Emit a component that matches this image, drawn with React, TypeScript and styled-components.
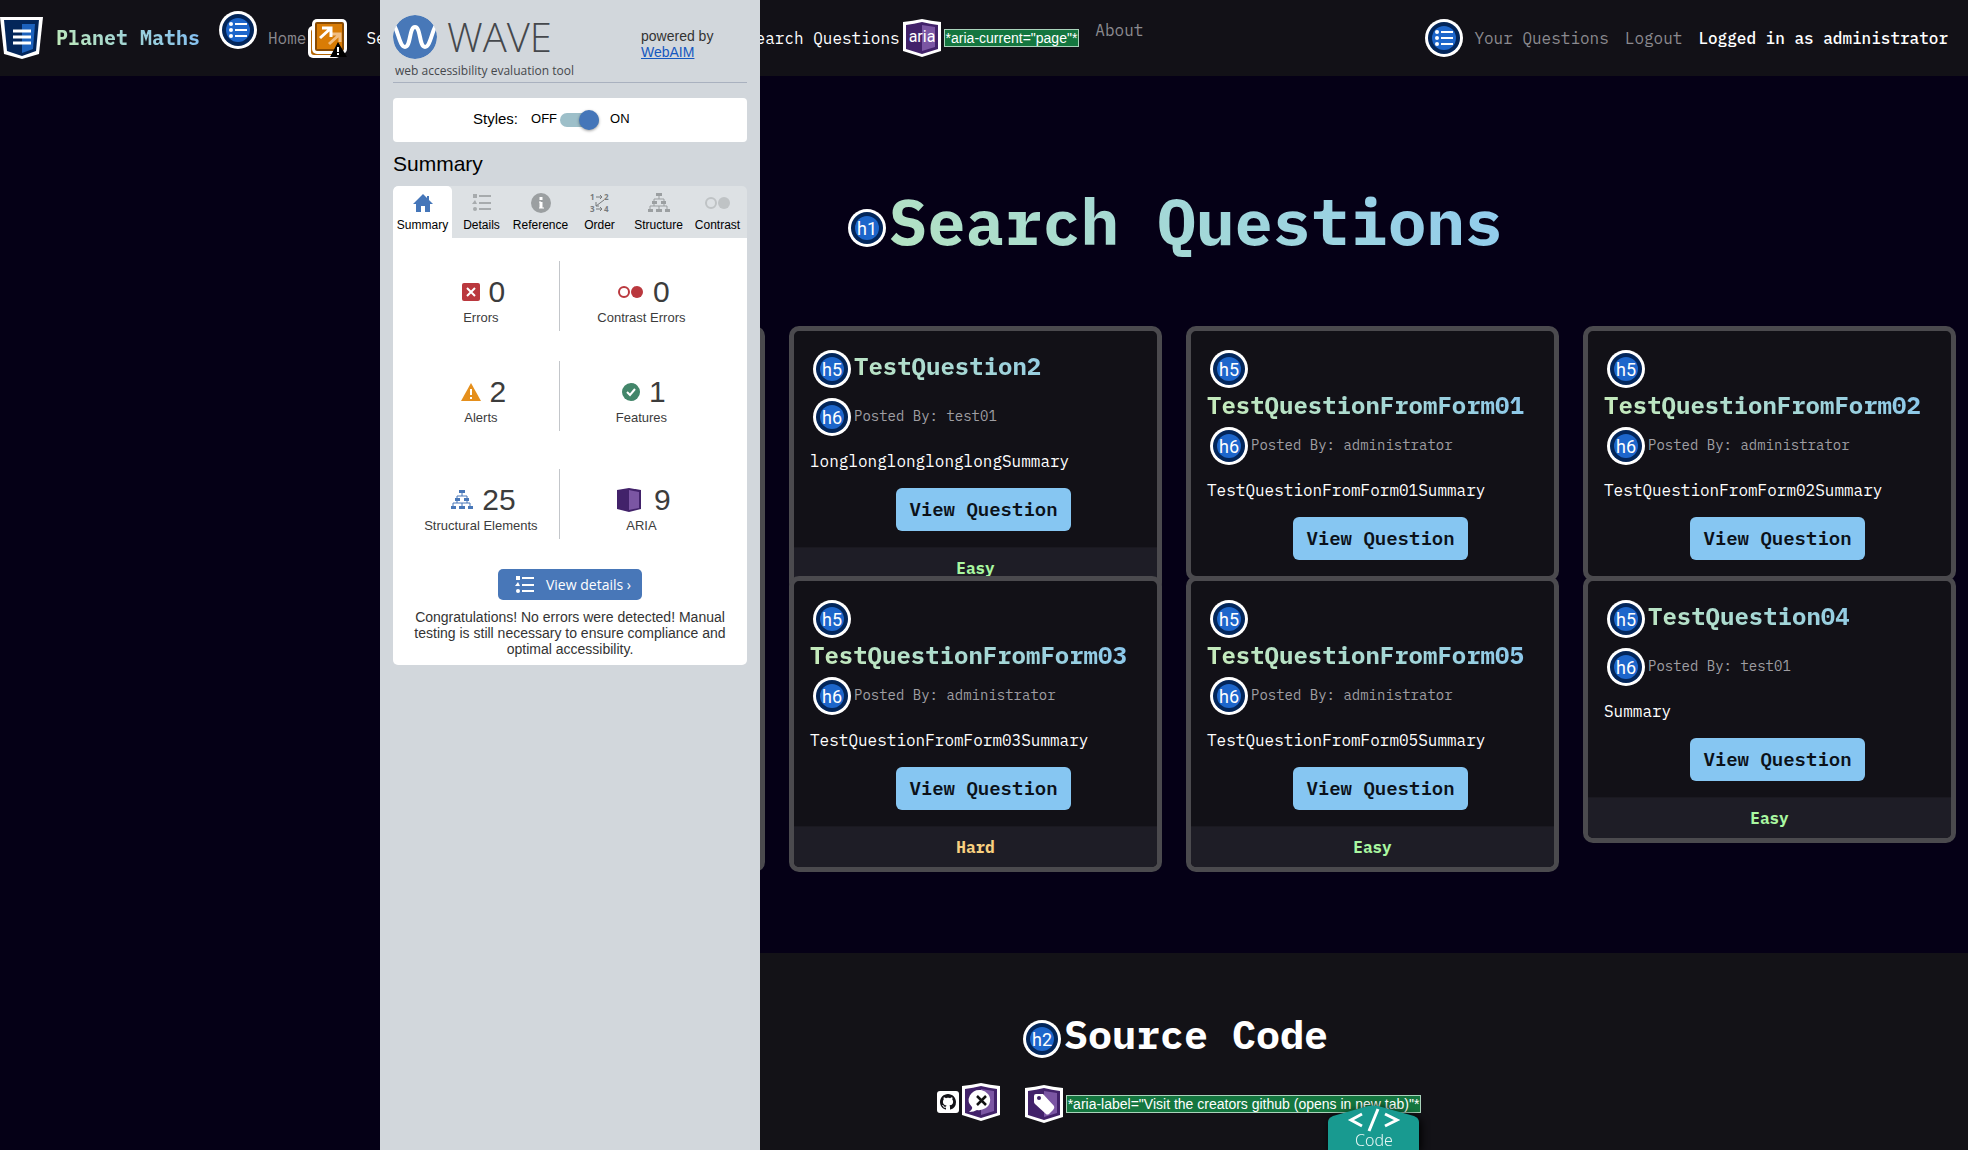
import React from "react";
import styled, { createGlobalStyle } from "styled-components";

const MONO = '"IBM Plex Mono", "Liberation Mono", monospace';
const SANS = '"Liberation Sans", Arial, sans-serif';
const OPEN = '"Open Sans", "Noto Sans", sans-serif';
const BADGE = 'Roboto, "Open Sans", sans-serif';

const GlobalStyle = createGlobalStyle`
  * { box-sizing: border-box; }
  body {
    margin: 0;
    background: #050016;
    color: #fff;
    font-family: ${MONO};
    font-size: 16px;
    line-height: 24px;
  }
  h1, h2, h5, h6, p { margin: 0; }
  a { color: inherit; text-decoration: none; }
  svg { display: block; flex: none; overflow: visible; }
`;

/* ---------- page shell ---------- */

const Page = styled.div`
  min-height: 100vh;
  display: flex;
  flex-direction: column;
`;

const Content = styled.div`
  margin-left: 380px;
  flex: 1;
  display: flex;
  flex-direction: column;
`;

const NavBar = styled.nav`
  height: 76px;
  display: flex;
  align-items: center;
  padding-right: 20px;
  background: #121117;
  white-space: nowrap;
`;

const NavGroup = styled.div<{ $gap: number; $flex?: string }>`
  display: flex;
  align-items: center;
  gap: ${(p) => p.$gap}px;
  flex: ${(p) => p.$flex ?? "none"};
`;

const Brand = styled.a`
  margin: 0 17px 0 11px;
  font-size: 20px;
  font-weight: 700;
  background: linear-gradient(45deg, #c1ebb6, #7fbcf5);
  -webkit-background-clip: text;
  background-clip: text;
  color: transparent;
`;

const NavLink = styled.a<{ $tone?: "muted" | "bright" }>`
  color: ${(p) => (p.$tone === "bright" ? "#ffffff" : "#8b8a8f")};
`;

const Raised = styled.span`
  display: inline-flex;
  padding-bottom: 16px;
`;

const SkipLink = styled(NavLink)`
  margin-left: 17px;
`;

const AriaNote = styled.span`
  padding: 0 1px;
  border: 1px solid #a9d3bb;
  background: #14763f;
  color: #fff;
  font: 14px/16px ${SANS};
  white-space: nowrap;
`;

const UserName = styled.span`
  font-weight: 500;
`;

/* ---------- main ---------- */

const Main = styled.main`
  padding: 107px 12px 81px;
`;

const PageTitle = styled.h1`
  display: flex;
  justify-content: center;
  margin-bottom: 66px;
  font-size: 64px;
  line-height: 77px;
`;

const TitleText = styled.span`
  background: linear-gradient(45deg, #b4e3c2, #90cbef);
  -webkit-background-clip: text;
  background-clip: text;
  color: transparent;
`;

const IconSlot = styled.span`
  display: inline-block;
  vertical-align: middle;
  margin: 3px;
`;

const CardGrid = styled.div`
  display: grid;
  grid-template-columns: repeat(4, 1fr);
  grid-template-rows: 250px auto;
  column-gap: 24px;
  align-items: start;
`;

const Card = styled.article`
  border: 5px solid #4b4a4e;
  border-radius: 10px;
  background: #121117;
  overflow: hidden;
`;

const TallCard = styled(Card)`
  grid-row: 1 / span 2;
  align-self: stretch;
`;

const CardBody = styled.div`
  padding: 16px;
`;

const CardTitle = styled.h5`
  font-size: 24px;
  line-height: 29px;
  background: linear-gradient(45deg, #c8ecb8, #7fc0f5);
  -webkit-background-clip: text;
  background-clip: text;
  color: transparent;
`;

const CardAuthor = styled.h6`
  margin: 4px 0 10px;
  font-size: 14px;
  line-height: 17px;
  font-weight: 400;
  color: #9f9ea2;
`;

const CardAction = styled.div`
  display: flex;
  justify-content: center;
  padding: 15px 0 0 16px;
`;

const ViewLink = styled.a`
  padding: 8px 13px;
  border-radius: 6px;
  background: #86c6f2;
  color: #0b1119;
  font-size: 19px;
  line-height: 27px;
  font-weight: 600;
`;

const CardFooter = styled.footer<{ $level: string }>`
  padding: 8px;
  border-top: 1px solid #1a1920;
  background: #1e1d26;
  color: ${(p) => (p.$level === "Hard" ? "#f8d080" : "#a9f7a0")};
  font-weight: 700;
  text-align: center;
`;

/* ---------- footer ---------- */

const PageFooter = styled.footer`
  flex: 1;
  padding-top: 57px;
  background: #131217;
`;

const SourceTitle = styled.h2`
  font-size: 40px;
  line-height: 48px;
  text-align: center;
`;

const SourceLinks = styled.div`
  display: flex;
  justify-content: center;
  align-items: center;
  gap: 3px;
  padding: 21px 0 0 10px;
`;

const LabelGroup = styled.a`
  display: flex;
  align-items: center;
  gap: 3px;
  padding: 3px 0 0 22px;
`;

const CodeTab = styled.button`
  position: fixed;
  left: 1328px;
  bottom: 0;
  width: 91px;
  height: 45px;
  padding: 0;
  border: 0;
  background: none;
  filter: drop-shadow(2px 2px 4px #000000);
`;

/* ---------- WAVE panel ---------- */

const WavePanel = styled.aside`
  position: fixed;
  inset: 0 auto 0 380px;
  width: 380px;
  padding: 15px 13px;
  background: #d2d7dc;
  color: #333;
  font-family: ${SANS};
`;

const WaveHeader = styled.header`
  display: flex;
  justify-content: space-between;
  padding-bottom: 2px;
  border-bottom: 1px solid #a9b1bf;
  margin-bottom: 15px;
`;

const WaveName = styled.div`
  display: flex;
  align-items: center;
  gap: 10px;
  font: 300 40px/44px ${OPEN};
  color: #45484c;
`;

const WaveTagline = styled.div`
  padding: 3px 0 0 2px;
  font: 12px/18px ${OPEN};
  color: #45484c;
`;

const Powered = styled.div`
  width: 106px;
  padding-top: 13px;
  font-size: 14px;
  line-height: 16px;
  a { color: #1558c0; text-decoration: underline; }
`;

const StylesBox = styled.label`
  display: flex;
  align-items: center;
  height: 44px;
  padding: 0 0 2px 80px;
  border-radius: 4px;
  background: #fff;
  color: #000;
  font-size: 13px;
`;

const StylesName = styled.span`
  margin-right: 13px;
  font-size: 15px;
`;

const Toggle = styled.input`
  appearance: none;
  display: flex;
  justify-content: flex-end;
  align-items: center;
  width: 39px;
  height: 14px;
  margin: 2px 11px 0 3px;
  border-radius: 7px;
  background: #9dbfc9;
  &::before {
    content: "";
    width: 20px;
    height: 20px;
    border-radius: 50%;
    background: #4576b9;
    box-shadow: 0 1px 3px rgba(0, 0, 0, 0.4);
  }
`;

const PanelTitle = styled.div`
  padding: 10px 0;
  color: #000;
  font-size: 21px;
  line-height: 24px;
`;

const Tabs = styled.div`
  display: grid;
  grid-template-columns: repeat(6, 1fr);
  height: 52px;
  border-radius: 5px 5px 0 0;
  overflow: hidden;
  background: #dde1e4;
`;

const Tab = styled.button<{ $active?: boolean }>`
  display: flex;
  flex-direction: column;
  align-items: center;
  gap: 3px;
  padding: 6px 0 0;
  border: 0;
  border-radius: 5px 5px 0 0;
  background: ${(p) => (p.$active ? "#fff" : "transparent")};
  color: #000;
  font: 12px/16px ${SANS};
`;

const Report = styled.section`
  display: flex;
  flex-direction: column;
  padding: 23px 0 8px;
  border-radius: 0 0 5px 5px;
  background: #fff;
`;

const StatRow = styled.div<{ $last?: boolean }>`
  display: grid;
  grid-template-columns: 49fr 51fr;
  height: 70px;
  margin: ${(p) => (p.$last ? "8px" : "0")} 24px 30px 10px;
`;

const Stat = styled.div`
  display: flex;
  flex-direction: column;
  align-items: center;
  padding-top: 14px;
  font-size: 13px;
  line-height: 16px;
  color: #3c3c3c;
  &:first-child { border-right: 1px solid #c3c6ca; }
`;

const StatValue = styled.div`
  display: flex;
  align-items: center;
  gap: 9px;
  margin: 0 0 1px 5px;
  font-size: 30px;
  line-height: 34px;
`;

const DetailsButton = styled.button`
  align-self: center;
  display: flex;
  align-items: center;
  gap: 11px;
  height: 31px;
  margin-bottom: 9px;
  padding: 0 11px 0 17px;
  border: 0;
  border-radius: 5px;
  background: #4877b8;
  color: #fff;
  font: 14px/20px ${OPEN};
`;

const Verdict = styled.p`
  padding: 0 20px;
  font-size: 14px;
  line-height: 16px;
  text-align: center;
`;

/* ---------- icons ---------- */

const Ring = ({ children }: { children: React.ReactNode }) => (
  <svg width="38" height="38" viewBox="0 0 38 38">
    <circle cx="19" cy="19" r="19" fill="#fff" />
    <circle cx="19" cy="19" r="16" fill="#03265a" />
    <circle cx="19" cy="19" r="12" fill="#1d66cb" />
    {children}
  </svg>
);

const HeadingIcon = ({ level }: { level: number }) => (
  <IconSlot>
    <Ring>
      <text x="19" y="26" textAnchor="middle" fill="#fff" fontFamily={BADGE} fontSize="18" fontWeight="400">
        h{level}
      </text>
    </Ring>
  </IconSlot>
);

const ListRing = () => (
  <Ring>
    <g fill="#fff">
      <circle cx="12" cy="13" r="2" />
      <circle cx="12" cy="19" r="2" />
      <circle cx="12" cy="25" r="2" />
    </g>
    <path d="M16 13h12M16 19h12M16 25h12" stroke="#fff" strokeWidth="2" />
  </Ring>
);

const NavDocIcon = () => (
  <svg width="43" height="42" viewBox="0 0 43 42">
    <path d="M0 0h43l-4 37-17 5-18-5z" fill="#fff" />
    <path d="M4 3h35l-3 31-14 5-15-5z" fill="#03265a" />
    <path d="M22 7h13l-2 25-11 4z" fill="#1d62bd" />
    <path d="M13 14h18M13 20h18M13 26h18" stroke="#fff" strokeWidth="3" />
  </svg>
);

const SkipIcon = () => (
  <svg width="39" height="39" viewBox="0 0 39 39">
    <rect x="0" y="7" width="33" height="32" rx="5" fill="#fff" />
    <rect x="3" y="10" width="26" height="26" rx="3" fill="#b46503" />
    <rect x="4" y="0" width="35" height="35" rx="5" fill="#fff" />
    <rect x="7" y="3" width="29" height="29" rx="2" fill="#8a4b02" />
    <rect x="9" y="5" width="25" height="25" fill="#d97c05" />
    <path d="M21 25l10-9M24 15h8v8" fill="none" stroke="#f0bd82" strokeWidth="3" />
    <path d="M12 19l10-9M14 9h9v9" fill="none" stroke="#fff" strokeWidth="3" />
    <path d="M30 23l9 15H22z" fill="#000" />
    <path d="M30 28v5M30 34v2" stroke="#fff" strokeWidth="2" />
  </svg>
);

const AriaShield = ({ children }: { children: React.ReactNode }) => (
  <svg width="38" height="38" viewBox="0 0 38 38">
    <path d="M0 3Q10 2 19 0q9 2 19 3v29l-19 6-19-6z" fill="#fff" />
    <path d="M3 6q8-1 16-3 8 2 16 3v24l-16 5-16-5z" fill="#42226a" />
    <path d="M19 6l13 2v20l-13 4z" fill="#7b56a3" />
    {children}
  </svg>
);

const AriaTextIcon = () => (
  <AriaShield>
    <text x="19" y="23" textAnchor="middle" fill="#fff" fontFamily={BADGE} fontSize="16">
      aria
    </text>
  </AriaShield>
);

const AriaHiddenIcon = () => (
  <AriaShield>
    <path d="M19 7a11 10 0 1 1-4 20q-3 2-8 2 4-3 3-5A11 10 0 0 1 19 7z" fill="#fff" />
    <path d="M15 13l9 9M24 13l-9 9" stroke="#111" strokeWidth="2.5" />
  </AriaShield>
);

const AriaTagIcon = () => (
  <AriaShield>
    <path d="M9 11q0-2 2-2h7l11 12q1 2-1 4l-4 4q-2 1-3 0L10 19q-1-1-1-2z" fill="#fff" />
    <circle cx="14" cy="13" r="2" fill="#42226a" />
  </AriaShield>
);

const GithubIcon = () => (
  <svg width="22" height="22" viewBox="0 0 22 22">
    <rect width="22" height="22" rx="3" fill="#fff" />
    <path
      transform="translate(3 3)"
      d="M8 0C3.58 0 0 3.58 0 8c0 3.54 2.29 6.53 5.47 7.59.4.07.55-.17.55-.38 0-.19-.01-.82-.01-1.49-2.01.37-2.53-.49-2.69-.94-.09-.23-.48-.94-.82-1.13-.28-.15-.68-.52-.01-.53.63-.01 1.08.58 1.23.82.72 1.21 1.87.87 2.33.66.07-.52.28-.87.51-1.07-1.78-.2-3.64-.89-3.64-3.95 0-.87.31-1.59.82-2.15-.08-.2-.36-1.02.08-2.12 0 0 .67-.21 2.2.82.64-.18 1.32-.27 2-.27s1.36.09 2 .27c1.53-1.04 2.2-.82 2.2-.82.44 1.1.16 1.92.08 2.12.51.56.82 1.27.82 2.15 0 3.07-1.87 3.75-3.65 3.95.29.25.54.73.54 1.48 0 1.07-.01 1.93-.01 2.2 0 .21.15.46.55.38A8.01 8.01 0 0 0 16 8c0-4.42-3.58-8-8-8z"
      fill="#131217"
    />
  </svg>
);

const WaveLogo = () => (
  <svg width="44" height="44" viewBox="0 0 44 44">
    <defs>
      <clipPath id="wave-disc">
        <circle cx="22" cy="22" r="22" />
      </clipPath>
    </defs>
    <g clipPath="url(#wave-disc)">
      <circle cx="22" cy="22" r="22" fill="#4878b8" />
      <path
        d="M-1 8C5 12 6 32 12 32S16 12 22 12s4 20 10 20 7-20 13-24"
        fill="none"
        stroke="#fff"
        strokeWidth="4"
      />
    </g>
  </svg>
);

const HomeIcon = () => (
  <svg width="22" height="22" viewBox="0 0 22 22">
    <path d="M11 2L1 12h3v8h5v-6h4v6h5v-8h3l-4-4V4h-2v2z" fill="#4576b9" />
  </svg>
);

const ListIcon = ({ color }: { color: string }) => (
  <svg width="20" height="22" viewBox="0 0 20 22">
    <rect x="1" y="2" width="4" height="4" fill={color} />
    <path d="M3 8l2 4H0z" fill={color} />
    <circle cx="3" cy="17" r="2" fill={color} />
    <path d="M7 4h12M7 11h12M7 17h12" stroke={color} strokeWidth="2" />
  </svg>
);

const InfoIcon = () => (
  <svg width="22" height="22" viewBox="0 0 22 22">
    <circle cx="11" cy="11" r="10" fill="#9b9fa1" />
    <path d="M11 5v3M11 10v6" stroke="#fff" strokeWidth="3" />
    <path d="M9 10h2M9 16h5" stroke="#fff" strokeWidth="1" />
  </svg>
);

const OrderIcon = () => (
  <svg width="22" height="22" viewBox="0 0 22 22" fill="#777a7c" fontFamily={OPEN} fontSize="8" fontWeight="700">
    <text x="1" y="8">1</text>
    <text x="15" y="8">2</text>
    <text x="1" y="20">3</text>
    <text x="15" y="20">4</text>
    <path
      d="M7 5h6M11 3l2 2-2 2M7 17h6M11 15l2 2-2 2M15 8l-8 6M7 10v4h3"
      fill="none"
      stroke="#777a7c"
      strokeWidth="1"
    />
  </svg>
);

const TreeIcon = ({ color }: { color: string }) => (
  <svg width="22" height="22" viewBox="0 0 22 22">
    <g fill={color}>
      <path d="M8 1h6v3H8zM4 9h5v3H4zM13 9h5v3h-5zM0 17h5v3H0zM8 17h6v3H8zM17 17h5v3h-5z" />
    </g>
    <path d="M11 4v3M6 9V7h10v2M6 12v2M16 12v2M2 17v-3h17v3M11 17v-3" fill="none" stroke={color} strokeWidth="1" />
  </svg>
);

const ContrastIcon = ({ color }: { color: string }) => (
  <svg width="26" height="22" viewBox="0 0 26 22">
    <circle cx="6" cy="11" r="5" fill="none" stroke={color} strokeWidth="2" />
    <circle cx="19" cy="11" r="6" fill={color} />
  </svg>
);

const ErrorIcon = () => (
  <svg width="18" height="18" viewBox="0 0 18 18">
    <rect width="18" height="18" rx="2" fill="#ba383e" />
    <path d="M5 5l8 8M13 5l-8 8" stroke="#fff" strokeWidth="2" />
  </svg>
);

const AlertIcon = () => (
  <svg width="20" height="18" viewBox="0 0 20 18">
    <path d="M10 0l10 18H0z" fill="#e58f1c" />
    <path d="M10 6v6M10 14v2" stroke="#fff" strokeWidth="2" />
  </svg>
);

const CheckIcon = () => (
  <svg width="18" height="18" viewBox="0 0 18 18">
    <circle cx="9" cy="9" r="9" fill="#43866a" />
    <path d="M5 9l3 3 5-6" fill="none" stroke="#fff" strokeWidth="2" />
  </svg>
);

const AriaCubeIcon = () => (
  <svg width="28" height="24" viewBox="0 0 28 24">
    <path d="M0 2l12-2 12 2v19l-12 3-12-3z" fill="#42226a" />
    <path d="M12 2l10 2v16l-10 2z" fill="#7b56a3" />
  </svg>
);

const CodeShape = () => (
  <svg width="91" height="45" viewBox="0 0 91 45">
    <path d="M0 45V17q0-4 5-6L40 1q5-1 10 0l36 10q5 2 5 6v28z" fill="#189a90" />
    <path d="M34 9L23 15l11 6M57 9l12 6-12 6M50 4l-9 22" fill="none" stroke="#fff" strokeWidth="3" />
    <text x="46" y="41" textAnchor="middle" fill="#e8f6f4" fontFamily='"Noto Sans", sans-serif' fontSize="16" fontWeight="300">
      Code
    </text>
  </svg>
);

/* ---------- data ---------- */

type Question = { title: string; author: string; summary: string; level?: string };

const questions: Question[] = [
  { title: "TestQuestion2", author: "test01", summary: "longlonglonglonglongSummary", level: "Easy" },
  { title: "TestQuestionFromForm01", author: "administrator", summary: "TestQuestionFromForm01Summary" },
  { title: "TestQuestionFromForm02", author: "administrator", summary: "TestQuestionFromForm02Summary" },
  { title: "TestQuestionFromForm03", author: "administrator", summary: "TestQuestionFromForm03Summary", level: "Hard" },
  { title: "TestQuestionFromForm05", author: "administrator", summary: "TestQuestionFromForm05Summary", level: "Easy" },
  { title: "TestQuestion04", author: "test01", summary: "Summary", level: "Easy" },
];

const tabs = [
  { name: "Summary", icon: <HomeIcon /> },
  { name: "Details", icon: <ListIcon color="#a7abad" /> },
  { name: "Reference", icon: <InfoIcon /> },
  { name: "Order", icon: <OrderIcon /> },
  { name: "Structure", icon: <TreeIcon color="#9b9fa1" /> },
  { name: "Contrast", icon: <ContrastIcon color="#bfc3c5" /> },
];

const stats = [
  [
    { name: "Errors", value: 0, icon: <ErrorIcon /> },
    { name: "Contrast Errors", value: 0, icon: <ContrastIcon color="#ba383e" /> },
  ],
  [
    { name: "Alerts", value: 2, icon: <AlertIcon /> },
    { name: "Features", value: 1, icon: <CheckIcon /> },
  ],
  [
    { name: "Structural Elements", value: 25, icon: <TreeIcon color="#4877b8" /> },
    { name: "ARIA", value: 9, icon: <AriaCubeIcon /> },
  ],
];

export default function App() {
  return (
    <Page>
      <GlobalStyle />
      <NavBar>
        <NavGroup $gap={2} $flex="0 0 746px">
          <NavDocIcon />
          <Brand href="#">Planet Maths</Brand>
          <NavGroup $gap={11}>
            <Raised>
              <ListRing />
            </Raised>
            <NavLink href="#">Home</NavLink>
          </NavGroup>
          <SkipIcon />
          <SkipLink href="#questions" $tone="bright">
            Search
          </SkipLink>
        </NavGroup>
        <NavGroup $gap={16} $flex="1">
          <NavGroup $gap={3}>
            <NavLink href="#" $tone="bright" aria-current="page">
              Search Questions
            </NavLink>
            <AriaTextIcon />
            <AriaNote>*aria-current="page"*</AriaNote>
          </NavGroup>
          <Raised>
            <NavLink href="#">About</NavLink>
          </Raised>
        </NavGroup>
        <NavGroup $gap={16}>
          <NavGroup $gap={11}>
            <ListRing />
            <NavLink href="#">Your Questions</NavLink>
          </NavGroup>
          <NavLink href="#">Logout</NavLink>
          <UserName>Logged in as administrator</UserName>
        </NavGroup>
      </NavBar>

      <Content>
        <Main id="questions">
          <PageTitle>
            <span>
              <HeadingIcon level={1} />
            </span>
            <TitleText>Search Questions</TitleText>
          </PageTitle>
          <CardGrid>
            <TallCard aria-hidden="true" />
            {questions.map((q) => (
              <Card key={q.title}>
                <CardBody>
                  <CardTitle>
                    <HeadingIcon level={5} />
                    {q.title}
                  </CardTitle>
                  <CardAuthor>
                    <HeadingIcon level={6} />
                    Posted By: {q.author}
                  </CardAuthor>
                  <p>{q.summary}</p>
                  <CardAction>
                    <ViewLink href="#">View Question</ViewLink>
                  </CardAction>
                </CardBody>
                {q.level && <CardFooter $level={q.level}>{q.level}</CardFooter>}
              </Card>
            ))}
          </CardGrid>
        </Main>
        <PageFooter>
          <SourceTitle>
            <HeadingIcon level={2} />
            Source Code
          </SourceTitle>
          <SourceLinks>
            <GithubIcon />
            <AriaHiddenIcon />
            <LabelGroup href="#">
              <AriaTagIcon />
              <AriaNote>*aria-label="Visit the creators github (opens in new tab)"*</AriaNote>
            </LabelGroup>
          </SourceLinks>
        </PageFooter>
      </Content>

      <WavePanel>
        <WaveHeader>
          <div>
            <WaveName>
              <WaveLogo />
              WAVE
            </WaveName>
            <WaveTagline>web accessibility evaluation tool</WaveTagline>
          </div>
          <Powered>
            powered by
            <br />
            <a href="#">WebAIM</a>
          </Powered>
        </WaveHeader>
        <StylesBox>
          <StylesName>Styles:</StylesName>
          OFF
          <Toggle type="checkbox" role="switch" defaultChecked />
          ON
        </StylesBox>
        <PanelTitle>Summary</PanelTitle>
        <Tabs role="tablist">
          {tabs.map((t, i) => (
            <Tab key={t.name} role="tab" aria-selected={i === 0} $active={i === 0}>
              {t.icon}
              {t.name}
            </Tab>
          ))}
        </Tabs>
        <Report>
          {stats.map((row, i) => (
            <StatRow key={i} $last={i === 2}>
              {row.map((s) => (
                <Stat key={s.name}>
                  <StatValue>
                    {s.icon}
                    {s.value}
                  </StatValue>
                  {s.name}
                </Stat>
              ))}
            </StatRow>
          ))}
          <DetailsButton>
            <ListIcon color="#fff" />
            View details ›
          </DetailsButton>
          <Verdict>
            Congratulations! No errors were detected! Manual testing is still necessary to ensure compliance and
            optimal accessibility.
          </Verdict>
        </Report>
      </WavePanel>

      <CodeTab aria-label="Code">
        <CodeShape />
      </CodeTab>
    </Page>
  );
}
